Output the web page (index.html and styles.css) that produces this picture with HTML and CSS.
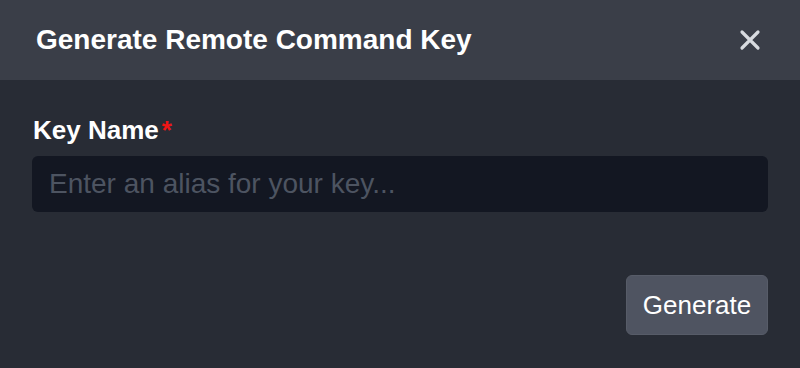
FILE: index.html
```html
<!DOCTYPE html>
<html>
<head>
<meta charset="utf-8">
<link rel="stylesheet" href="styles.css">
</head>
<body>
<div class="modal">
  <div class="modal-header">
    <h2 class="modal-title">Generate Remote Command Key</h2>
    <button class="close-btn" aria-label="Close">
      <svg width="22" height="22" viewBox="0 0 22 22"><path d="M3 3L19 19M19 3L3 19" stroke="#d8dbe0" stroke-width="3.2" stroke-linecap="round"/></svg>
    </button>
  </div>
  <div class="modal-body">
    <label class="field-label">Key Name<span class="req">*</span></label>
    <input class="text-input" type="text" placeholder="Enter an alias for your key...">
    <div class="actions">
      <button class="btn">Generate</button>
    </div>
  </div>
</div>
</body>
</html>
```
FILE: styles.css
```css
html, body {
  margin: 0;
  padding: 0;
  background: #282c35;
}
body {
  font-family: "Liberation Sans", Arial, sans-serif;
  width: 800px;
  height: 368px;
  overflow: hidden;
}
.modal {
  width: 800px;
  height: 368px;
  background: #282c35;
  overflow: hidden;
  display: flex;
  flex-direction: column;
}
.modal-header {
  height: 80px;
  background: #3a3e48;
  display: flex;
  align-items: center;
  justify-content: space-between;
  padding: 0 36px 0 36px;
  box-sizing: border-box;
}
.modal-title {
  margin: 0;
  color: #ffffff;
  font-size: 28px;
  font-weight: bold;
  line-height: 32px;
}
.close-btn {
  background: none;
  border: 0;
  padding: 0;
  width: 22px;
  height: 22px;
  display: flex;
  margin-right: 3px;
}
.modal-body {
  padding: 36px 32px 0 32px;
  display: flex;
  flex-direction: column;
}
.field-label {
  color: #ffffff;
  font-weight: bold;
  font-size: 26px;
  line-height: 28px;
  height: 28px;
  margin-left: 1px;
}
.req {
  color: #f01515;
  margin-left: 3px;
}
.text-input {
  margin-top: 12px;
  height: 56px;
  box-sizing: border-box;
  background: #131722;
  border: 0;
  border-radius: 6px;
  padding: 0 17px;
  font-family: "Liberation Sans", Arial, sans-serif;
  font-size: 28px;
  color: #ffffff;
  outline: none;
}
.text-input::placeholder {
  color: #4d5461;
}
.actions {
  display: flex;
  justify-content: flex-end;
  margin-top: 63px;
}
.btn {
  width: 142px;
  height: 60px;
  background: #4f5461;
  color: #ffffff;
  border: 1px solid #575c68;
  border-radius: 6px;
  font-family: "Liberation Sans", Arial, sans-serif;
  font-size: 26px;
  padding: 0;
}
```
